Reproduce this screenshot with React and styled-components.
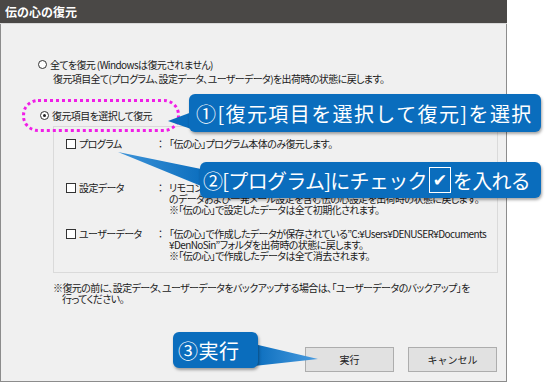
import styled, { createGlobalStyle } from "styled-components";

const GlobalStyle = createGlobalStyle`
  html, body {
    margin: 0;
    background: #ffffff;
  }
  body {
    font-family: "Noto Sans CJK JP", "Noto Sans", sans-serif;
    color: #1a1a1a;
  }
`;

const Page = styled.div`
  position: relative;
  width: 550px;
  height: 383px;
  overflow: hidden;
`;

const Window = styled.div`
  width: 507px;
  height: 382px;
  box-sizing: border-box;
  border: 1px solid #8c8c8c;
  border-top: none;
  background: #f0f0f0;
  display: flex;
  flex-direction: column;
`;

const TitleBar = styled.div`
  height: 23px;
  background: #4a4846;
  color: #ffffff;
  font-size: 12px;
  font-weight: 700;
  line-height: 23px;
  padding-left: 5px;
  margin: 0 -1px;
  border-bottom: 1px solid #d8d8d8;
`;

const Body = styled.div`
  flex: 1;
  display: flex;
  flex-direction: column;
  padding: 34px 9px 0 36px;
  font-size: 10px;
  font-feature-settings: "palt";
  letter-spacing: -0.6px;
  line-height: 13px;
`;

const OptionLine = styled.div`
  display: flex;
  align-items: center;
  gap: 3px;
  margin-left: ${(p) => p.$indent || 0}px;
  margin-top: ${(p) => p.$top || 0}px;
`;

const SubText = styled.div`
  margin-left: 16px;
  margin-top: 1px;
`;

const Radio = styled.span`
  width: 7px;
  height: 7px;
  border: 1px solid #333;
  border-radius: 50%;
  display: inline-flex;
  align-items: center;
  justify-content: center;
  background: #fff;
  &::after {
    content: "";
    width: 3px;
    height: 3px;
    border-radius: 50%;
    background: ${(p) => (p.$on ? "#222" : "transparent")};
  }
`;

const Check = styled.span`
  width: 8px;
  height: 8px;
  border: 1px solid #333;
  background: #fff;
  display: inline-block;
  flex-shrink: 0;
`;

const Panel = styled.div`
  margin: 4px 0 0 16px;
  width: 445px;
  height: 147px;
  box-sizing: border-box;
  border: 1px solid #dadada;
  padding: 11px 0 0 12px;
  display: flex;
  flex-direction: column;
`;

const Row = styled.div`
  display: grid;
  grid-template-columns: 92px 11px 1fr;
  height: ${(p) => p.$h}px;
  line-height: 11px;
`;

const ItemLabel = styled.div`
  display: flex;
  align-items: flex-start;
  gap: 3px;
  & > span:first-child {
    margin-top: 1px;
  }
`;

const Desc = styled.div`
  white-space: nowrap;
`;

const Note = styled.div`
  margin: 9px 0 0 16px;
  line-height: 11px;
  & > div + div {
    margin-left: 9px;
  }
`;

const ButtonBar = styled.div`
  margin-top: auto;
  margin-bottom: 9px;
  display: flex;
  justify-content: flex-end;
  gap: 14px;
`;

const Button = styled.button`
  width: 89px;
  height: 25px;
  background: #e1e1e1;
  border: 1px solid #adadad;
  font-family: inherit;
  font-size: 10px;
  color: #1a1a1a;
  padding: 0;
`;

const DottedMark = styled.div`
  position: absolute;
  left: 22px;
  top: 99px;
  width: 158px;
  height: 33px;
  box-sizing: border-box;
  border: 3px dotted #f01ee6;
  border-radius: 16px;
`;

const Callout = styled.div`
  position: absolute;
  left: ${(p) => p.$x}px;
  top: ${(p) => p.$y}px;
  width: ${(p) => p.$w}px;
  height: ${(p) => p.$h}px;
  box-sizing: border-box;
  background: #0a6dbd;
  border-radius: 6px;
  box-shadow: 1px 2px 3px rgba(0, 0, 0, 0.35);
  color: #ffffff;
  font-family: "Noto Sans CJK JP", sans-serif;
  font-size: 20px;
  font-weight: 400;
  display: flex;
  align-items: center;
  padding-left: ${(p) => p.$pad}px;
  white-space: nowrap;
  letter-spacing: ${(p) => p.$ls || 0}px;
`;

const CheckBox = styled.span`
  display: inline-flex;
  align-items: center;
  justify-content: center;
  width: 20px;
  height: 24px;
  border: 1.5px solid #ffffff;
  margin: 0 2px;
  font-family: "DejaVu Sans", sans-serif;
  font-size: 17px;
  letter-spacing: 0;
`;

const Tails = styled.svg`
  position: absolute;
  left: 0;
  top: 0;
  pointer-events: none;
`;

export default function App() {
  return (
    <Page>
      <GlobalStyle />
      <Window>
        <TitleBar>伝の心の復元</TitleBar>
        <Body>
          <OptionLine $indent={1}>
            <Radio />
            全てを復元 (Windowsは復元されません)
          </OptionLine>
          <SubText>
            復元項目全て(プログラム、設定データ、ユーザーデータ)を出荷時の状態に戻します。
          </SubText>
          <OptionLine $indent={3} $top={24}>
            <Radio $on />
            復元項目を選択して復元
          </OptionLine>
          <Panel>
            <Row $h={44}>
              <ItemLabel>
                <Check />
                プログラム
              </ItemLabel>
              <span>：</span>
              <Desc>「伝の心」プログラム本体のみ復元します。</Desc>
            </Row>
            <Row $h={46}>
              <ItemLabel>
                <Check />
                設定データ
              </ItemLabel>
              <span>：</span>
              <Desc>
                リモコン設定、ユーザー辞書、音声設定などの「伝の心」設定
                <br />
                のデータおよび一発メール設定を含む伝の心設定を出荷時の状態に戻します。
                <br />
                ※「伝の心」で設定したデータは全て初期化されます。
              </Desc>
            </Row>
            <Row $h={40}>
              <ItemLabel>
                <Check />
                ユーザーデータ
              </ItemLabel>
              <span>：</span>
              <Desc>
                「伝の心」で作成したデータが保存されている”C:¥Users¥DENUSER¥Documents
                <br />
                ¥DenNoSin”フォルダを出荷時の状態に戻します。
                <br />
                ※「伝の心」で作成したデータは全て消去されます。
              </Desc>
            </Row>
          </Panel>
          <Note>
            <div>
              ※復元の前に、設定データ、ユーザーデータをバックアップする場合は、「ユーザーデータのバックアップ」を
            </div>
            <div>行ってください。</div>
          </Note>
          <ButtonBar>
            <Button>実行</Button>
            <Button>キャンセル</Button>
          </ButtonBar>
        </Body>
      </Window>

      <DottedMark />

      <Tails width="550" height="383" viewBox="0 0 550 383">
        <defs>
          <linearGradient id="fadeL" x1="1" y1="0" x2="0" y2="0">
            <stop offset="0" stopColor="#0a6dbd" />
            <stop offset="1" stopColor="#3d93d8" />
          </linearGradient>
          <linearGradient id="fadeR" x1="0" y1="0" x2="1" y2="0">
            <stop offset="0" stopColor="#0a6dbd" />
            <stop offset="1" stopColor="#4a9ce0" />
          </linearGradient>
        </defs>
        <polygon points="192,112 194,130 168,121" fill="#0a6dbd" />
        <polygon points="206,170 206,188 118,152" fill="url(#fadeL)" />
        <polygon points="254,344 254,366 318,359" fill="url(#fadeR)" />
      </Tails>

      <Callout $x={189} $y={94} $w={352} $h={38} $pad={7} $ls={1.4}>
        ①[復元項目を選択して復元]を選択
      </Callout>
      <Callout $x={200} $y={162} $w={341} $h={36} $pad={3} $ls={-0.7}>
        ②[プログラム]にチェック<CheckBox>✔</CheckBox>を入れる
      </Callout>
      <Callout $x={173} $y={332} $w={85} $h={36} $pad={5} $ls={0.5}>
        ③実行
      </Callout>
    </Page>
  );
}
